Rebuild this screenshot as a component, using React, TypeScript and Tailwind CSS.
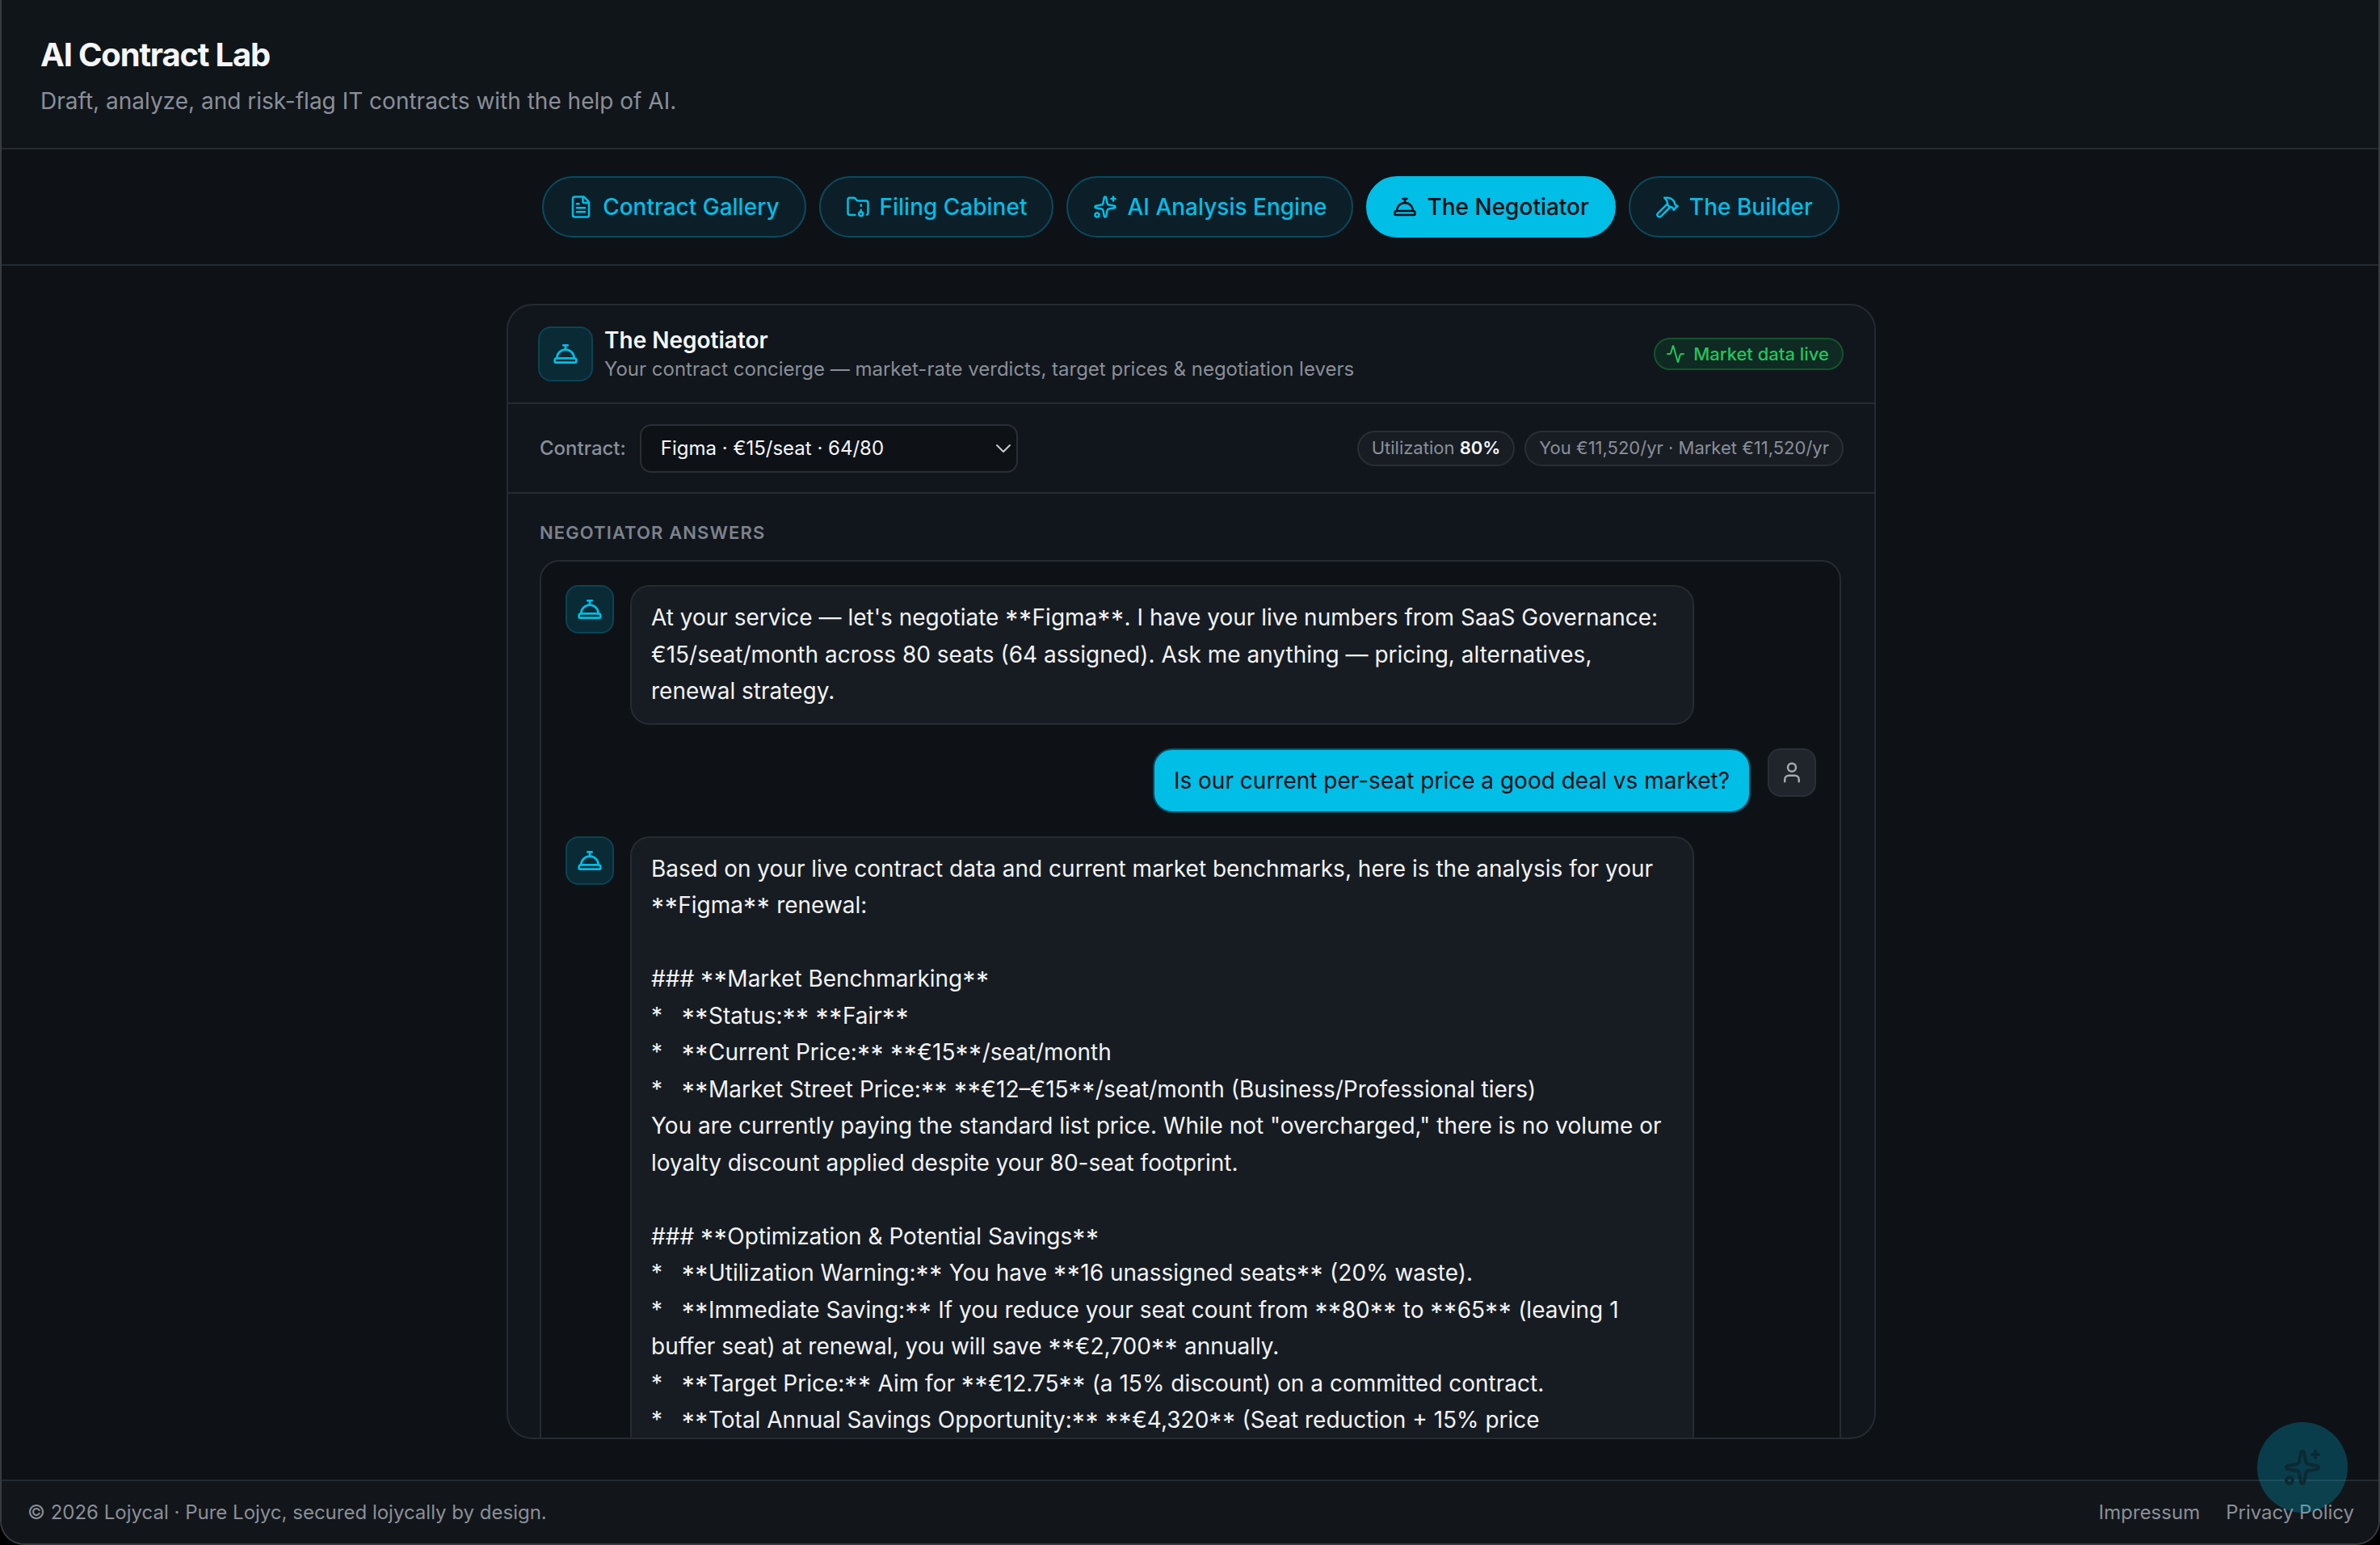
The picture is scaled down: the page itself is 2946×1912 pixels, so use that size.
import { Activity, ChevronDown, ConciergeBell, FileText, FolderArchive, Hammer, Sparkles, User } from "lucide-react";

const tabs = [
  { label: "Contract Gallery", Icon: FileText },
  { label: "Filing Cabinet", Icon: FolderArchive },
  { label: "AI Analysis Engine", Icon: Sparkles },
  { label: "The Negotiator", Icon: ConciergeBell, active: true },
  { label: "The Builder", Icon: Hammer },
];

function BotAvatar() {
  return (
    <div className="flex h-[60px] w-[60px] shrink-0 items-center justify-center rounded-[16px] border-2 border-[#0b4452] bg-[#0a2a35] text-[#00bee6]">
      <ConciergeBell size={32} strokeWidth={2} />
    </div>
  );
}

function Md({ lines }: { lines: string[] }) {
  return (
    <>
      {lines.map((line, n) => (
        <div key={n} className="h-[45.5px] whitespace-pre">
          {line.split(/(\*\*)/).map((part, i) =>
            part === "**" ? (
              <span key={i} className="relative top-[5px] text-[32px] leading-none tracking-[0.6px]">
                **
              </span>
            ) : (
              part
            ),
          )}
        </div>
      ))}
    </>
  );
}

const intro = [
  "At your service — let's negotiate **Figma**. I have your live numbers from SaaS Governance:",
  "€15/seat/month across 80 seats (64 assigned). Ask me anything — pricing, alternatives,",
  "renewal strategy.",
];

const answer = [
  "Based on your live contract data and current market benchmarks, here is the analysis for your",
  "**Figma** renewal:",
  "",
  "### **Market Benchmarking**",
  "*   **Status:** **Fair**",
  "*   **Current Price:** **€15**/seat/month",
  "*   **Market Street Price:** **€12–€15**/seat/month (Business/Professional tiers)",
  'You are currently paying the standard list price. While not "overcharged," there is no volume or',
  "loyalty discount applied despite your 80-seat footprint.",
  "",
  "### **Optimization & Potential Savings**",
  "*   **Utilization Warning:** You have **16 unassigned seats** (20% waste).",
  "*   **Immediate Saving:** If you reduce your seat count from **80** to **65** (leaving 1",
  "buffer seat) at renewal, you will save **€2,700** annually.",
  "*   **Target Price:** Aim for **€12.75** (a 15% discount) on a committed contract.",
  "*   **Total Annual Savings Opportunity:** **€4,320** (Seat reduction + 15% price",
];

export default function App() {
  return (
    <div className="relative flex h-[1912px] w-[2946px] flex-col overflow-hidden bg-black font-['Inter',sans-serif] text-[28px]">
      <div className="flex h-full w-full flex-col overflow-hidden rounded-b-[30px] border-2 border-t-0 border-[#383c42] bg-[#0e1217]">
        <header className="h-[185px] shrink-0 border-b-2 border-[#262b31] bg-[#10151a] pl-[48px] pt-[42px]">
          <h1 className="text-[40px] font-bold leading-[52px] tracking-[-1.2px] text-[#f4f6f9]">AI Contract Lab</h1>
          <p className="mt-[9px] text-[28px] leading-[44px] text-[#8a8f99]">Draft, analyze, and risk-flag IT contracts with the help of AI.</p>
        </header>

        <nav className="flex h-[144px] shrink-0 items-center justify-center gap-[16px] border-b-2 border-[#262b31] pl-[2px]">
          {tabs.map(({ label, Icon, active }) => (
            <button
              key={label}
              className={
                active
                  ? "flex h-[76px] items-center gap-[12px] rounded-full border-2 border-[#00bee6] bg-[#00bee6] px-[31px] text-[28px] font-medium text-[#0b1015]"
                  : "flex h-[76px] items-center gap-[12px] rounded-full border-2 border-[#0b4a5c] bg-[#0c1f29] px-[31px] text-[28px] font-medium text-[#00bee6]"
              }
            >
              <Icon size={30} strokeWidth={2} />
              {label}
            </button>
          ))}
        </nav>

        <main className="flex min-h-0 flex-1 justify-center pb-[50px] pt-[47px]">
          <section className="ml-[3px] flex w-[1695px] flex-col overflow-hidden rounded-[32px] border-2 border-[#262b31] bg-[#11161c]">
            <div className="flex h-[122px] shrink-0 items-center justify-between border-b-2 border-[#262b31] pl-[37px] pr-[38px]">
              <div className="flex items-center gap-[14px]">
                <div className="flex h-[68px] w-[68px] items-center justify-center rounded-[16px] border-2 border-[#0b4452] bg-[#0a2a35] text-[#00bee6]">
                  <ConciergeBell size={32} strokeWidth={2} />
                </div>
                <div className="pt-[2px]">
                  <div className="text-[28px] font-semibold leading-[36px] text-[#f4f6f9]">The Negotiator</div>
                  <div className="text-[24px] leading-[36px] text-[#8a8f99]">Your contract concierge — market-rate verdicts, target prices &amp; negotiation levers</div>
                </div>
              </div>
              <div className="flex h-[40px] items-center gap-[10px] rounded-full border-2 border-[#14532d] bg-[#0f2a22] pl-[13px] pr-[16px] text-[22px] font-medium text-[#22c55e]">
                <Activity size={24} strokeWidth={2} />
                Market data live
              </div>
            </div>

            <div className="flex h-[111px] shrink-0 items-center justify-between border-b-2 border-[#262b31] pl-[39px] pr-[38px]">
              <div className="flex items-center gap-[17px]">
                <span className="text-[24px] font-medium text-[#8a8f99]">Contract:</span>
                <div className="flex h-[60px] w-[468px] items-center justify-between rounded-[14px] border-2 border-[#2a2f35] bg-[#0e1217] pl-[24px] text-[24px] text-[#f4f6f9]">
                  Figma · €15/seat · 64/80
                  <ChevronDown size={32} strokeWidth={1.5} className="text-[#c7cbd1]" />
                </div>
              </div>
              <div className="flex items-center gap-[12px] text-[22px] text-[#8a8f99]">
                <div className="flex h-[44px] items-center rounded-full border-2 border-[#2a2f35] bg-[#181d23] px-[16px]">
                  Utilization&nbsp;<b className="font-semibold text-[#f4f6f9]">80%</b>
                </div>
                <div className="flex h-[44px] items-center rounded-full border-2 border-[#2a2f35] bg-[#181d23] px-[16px]">You €11,520/yr · Market €11,520/yr</div>
              </div>
            </div>

            <div className="flex min-h-0 flex-1 flex-col pl-[39px] pr-[41px] pt-[32px]">
              <div className="mb-[18px] h-[32px] text-[22px] font-semibold leading-[32px] tracking-[1.1px] text-[#7d838d]">NEGOTIATOR ANSWERS</div>
              <div className="flex min-h-0 flex-1 flex-col gap-[29px] overflow-hidden rounded-t-[24px] border-2 border-b-0 border-[#262b31] bg-[#0e1217] pl-[30px] pr-[29px] pt-[29px]">
                <div className="flex shrink-0 gap-[20px]">
                  <BotAvatar />
                  <div className="w-[1317px] rounded-[24px] border-2 border-[#262b31] bg-[#171c22] px-[24px] py-[16px] text-[28px] leading-[45.5px] text-[#f1f3f6]">
                    <Md lines={intro} />
                  </div>
                </div>
                <div className="flex shrink-0 justify-end gap-[21px]">
                  <div className="h-[80px] rounded-[24px] border-2 border-[#0b4a5c] bg-[#00bee6] px-[24px] py-[16px] text-[28px] leading-[45.5px] text-[#0b1015]">
                    Is our current per-seat price a good deal vs market?
                  </div>
                  <div className="flex h-[60px] w-[60px] shrink-0 items-center justify-center rounded-[16px] border-2 border-[#2a2f35] bg-[#20252c] text-[#a5aab2]">
                    <User size={30} strokeWidth={2} />
                  </div>
                </div>
                <div className="flex shrink-0 gap-[20px]">
                  <BotAvatar />
                  <div className="w-[1317px] rounded-[24px] border-2 border-[#262b31] bg-[#171c22] px-[24px] py-[16px] text-[28px] leading-[45.5px] text-[#f1f3f6]">
                    <Md lines={answer} />
                  </div>
                </div>
              </div>
            </div>
          </section>
        </main>

        <footer className="flex h-[79px] shrink-0 items-center justify-between border-t-2 border-[#262b31] bg-[#12161a] pl-[32px] pr-[30px] text-[24px] text-[#8a8f99]">
          <span>© 2026 Lojycal · Pure Lojyc, secured lojycally by design.</span>
          <div className="flex gap-[32px]">
            <span>Impressum</span>
            <span>Privacy Policy</span>
          </div>
        </footer>
      </div>

      <div className="absolute left-[2794px] top-[1760px] flex h-[112px] w-[112px] items-center justify-center rounded-full bg-[#00bee6]/25 text-[#0c2a34]">
        <Sparkles size={48} strokeWidth={2} />
      </div>
    </div>
  );
}
